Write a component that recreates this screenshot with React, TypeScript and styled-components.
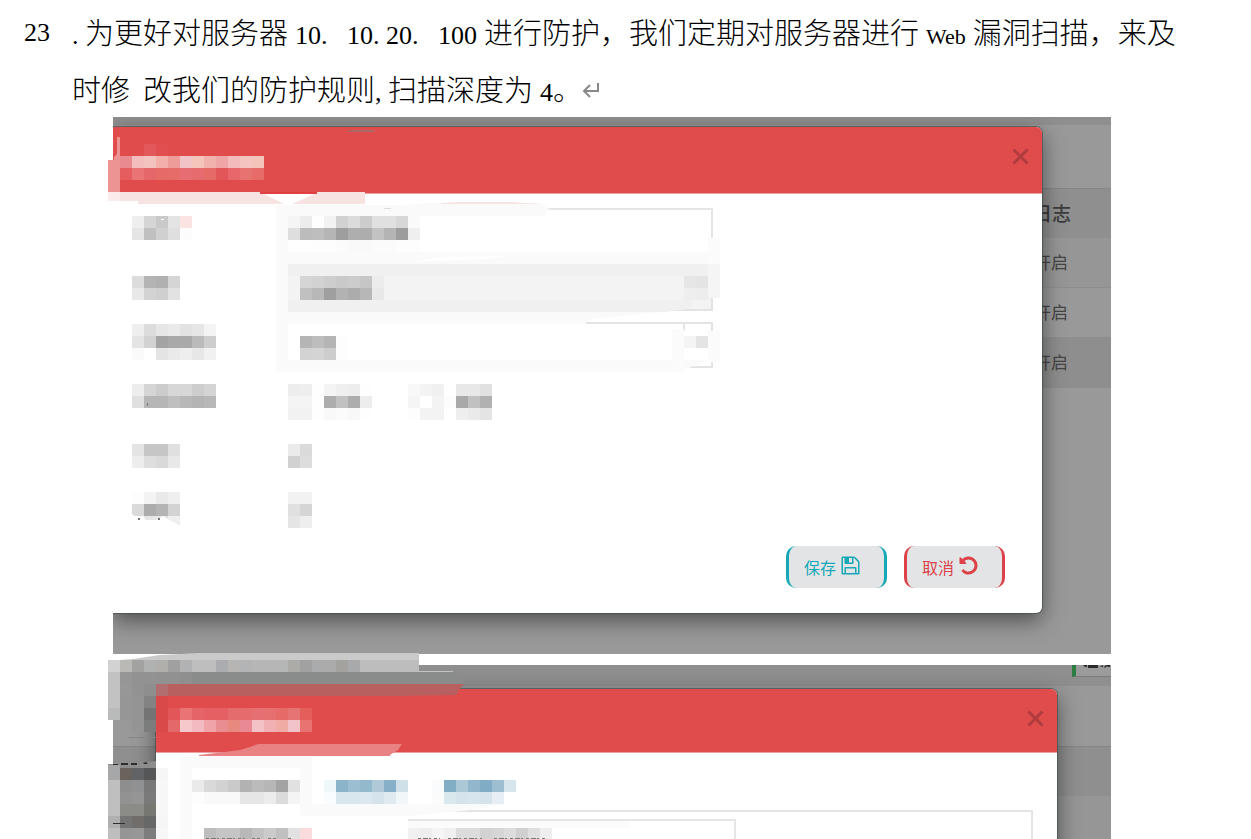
import React from "react";
import styled, { createGlobalStyle } from "styled-components";

const GlobalStyle = createGlobalStyle`
  * { box-sizing: border-box; }
  body { margin: 0; background: #fff; font-family: "Noto Sans CJK SC", sans-serif; }
`;

const Page = styled.main`
  height: 100vh;
  overflow: hidden;
  display: flex;
  flex-direction: column;
  padding-top: 3px;
`;

/* ---------- question text ---------- */

const Question = styled.div`
  display: grid;
  grid-template-columns: 48px 1fr;
  padding: 0 64px 0 24px;
  font-size: 29px;
  font-weight: 300;
  line-height: 57px;
  color: #000;
`;

const QuestionText = styled.p`
  margin: 0;
`;

const Latin = styled.span<{ $before?: boolean; $after?: boolean }>`
  font-family: "Liberation Serif", serif;
  font-size: 26px;
  font-weight: 400;
  line-height: 1;
  margin-left: ${(p) => (p.$before ? "7px" : "0")};
  margin-right: ${(p) => (p.$after ? "7px" : "0")};
`;

const LatinWord = styled(Latin)`
  font-size: 22px;
`;

const Half = styled.span`
  display: inline-block;
  width: 13px;
  white-space: pre;
`;

const QuestionNumber = styled.span`
  font-family: "Liberation Serif", serif;
  font-size: 26px;
  font-weight: 400;
  line-height: 60px;
`;

const ReturnMark = styled.svg`
  width: 18px;
  height: 16px;
  vertical-align: 3px;
`;

/* ---------- figures ---------- */

const Figure = styled.figure<{ $fill?: boolean }>`
  position: relative;
  display: grid;
  margin: 0 140px 11px 113px;
  ${(p) => (p.$fill ? "flex: 1; margin-bottom: 0;" : "")}
`;

const Scene = styled.div`
  display: grid;
  overflow: hidden;
`;

const Backdrop = styled.div`
  grid-area: 1 / 1;
  background: #999;
`;

const Strip = styled.div<{ $height: number }>`
  display: flex;
  justify-content: flex-end;
  height: ${(p) => p.$height}px;
  background: #8f8f8f;
`;

const LogTable = styled.table<{ $top: number }>`
  width: 100%;
  margin-top: ${(p) => p.$top}px;
  border-collapse: collapse;
  font-size: 17px;
  line-height: 24px;
  color: #454545;
`;

const HeadCell = styled.th`
  height: 50px;
  padding: 0 40px 0 0;
  background: #8f8f8f;
  box-shadow: inset 0 1px #868686;
  text-align: right;
  font-weight: 500;
  font-size: 19px;
  color: #3c3c3c;
`;

const Cell = styled.td<{ $tone: string }>`
  height: 50px;
  padding: 0 43px 2px 0;
  background: ${(p) => p.$tone};
  box-shadow: inset 0 -1px #8e8e8e;
  text-align: right;
`;

const GreenButton = styled.button`
  width: 39px;
  height: 12px;
  padding: 0;
  border: 0;
  border-left: 4px solid #2c7d41;
  border-bottom: 1px solid #7c7c7c;
  background: #9b9b9b;
  display: flex;
  align-items: flex-start;
`;

const Dialog = styled.section<{ $margin: string; $radius: string }>`
  grid-area: 1 / 1;
  position: relative;
  margin: ${(p) => p.$margin};
  background: #fff;
  border-radius: ${(p) => p.$radius};
  box-shadow: 0 0 0 1px rgba(60, 75, 75, 0.6), 0 7px 22px rgba(0, 0, 0, 0.5);
`;

const DialogHeader = styled.header<{ $height: number; $corner: string }>`
  display: flex;
  justify-content: flex-end;
  align-items: flex-start;
  height: ${(p) => p.$height}px;
  padding: 21px 13px;
  background: #e04b4b;
  border-bottom: 1px solid #e9a2a0;
  border-radius: ${(p) => p.$corner};
`;

const CloseButton = styled.button`
  padding: 0;
  border: 0;
  background: none;
  line-height: 0;
`;

const Form = styled.form`
  display: flex;
  flex-direction: column;
  gap: 11px;
  padding: 14px 37px 25px 174px;
`;

const Row = styled.label`
  display: flex;
  align-items: center;
  height: 46px;
`;

const RowGroup = styled.div`
  display: flex;
  gap: 96px;
`;

const TextInput = styled.input`
  width: 426px;
  height: 46px;
  border: 2px solid #e6e6e6;
  background: #fff;
  outline: none;
`;

const SelectBox = styled.select`
  width: 426px;
  height: 46px;
  border: 2px solid #e3e3e3;
  border-radius: 0;
  appearance: none;
  background: #fff;
  &:disabled { background: #f3f3f3; opacity: 1; }
`;

const Choice = styled.input`
  appearance: none;
  width: 24px;
  height: 24px;
  margin: 0;
`;

const Actions = styled.div`
  display: flex;
  justify-content: flex-end;
  gap: 17px;
  margin-top: -4px;
`;

const ActionButton = styled.button<{ $color: string }>`
  display: flex;
  align-items: center;
  gap: 4px;
  width: 101px;
  height: 42px;
  padding: 0 0 0 15px;
  border: solid ${(p) => p.$color};
  border-width: 0 3px;
  border-radius: 10px;
  background: #e2e4e6;
  color: ${(p) => p.$color};
  font: 400 16px/24px "Noto Sans CJK SC", sans-serif;
`;

const Icon = styled.svg`
  width: 21px;
  height: 21px;
  margin-bottom: 4px;
  fill: currentColor;
`;

const TabBody = styled.div`
  padding: 57px 24px 0;
`;

const Panel = styled.fieldset`
  min-height: 200px;
  margin: 0;
  padding: 7px 0 0 226px;
  border: 2px solid #e4e4e4;
`;

const PanelInput = styled(TextInput)`
  display: block;
  width: 328px;
`;

const Redaction = styled.svg<{ $top: number }>`
  position: absolute;
  left: -5px;
  top: ${(p) => p.$top}px;
  pointer-events: none;
`;

/* ---------- mosaic ---------- */

const CELL = 12;

/* One string per row; two digits are a grey, six are a full colour, "." leaves the cell clear. */
type Patch = [x: number, y: number, ...rows: string[]];

function Mosaic({ patches }: { patches: Patch[] }) {
  return (
    <g shapeRendering="crispEdges">
      {patches.flatMap(([x, y, ...rows]) =>
        rows.flatMap((row, r) =>
          row.split(" ").map((tone, c) =>
            tone === "." ? null : (
              <rect
                key={`${x}-${y}-${r}-${c}`}
                x={x + c * CELL}
                y={y + r * CELL}
                width={CELL}
                height={CELL}
                fill={"#" + (tone.length === 2 ? tone.repeat(3) : tone)}
              />
            )
          )
        )
      )}
    </g>
  );
}

const formPatches: Patch[] = [
  [144, 144, "e3595b e14f50"],
  [
    120, 156,
    "e98990 f3bdbe f3c3c0 f3b0aa ee9c99 f1c4c7 f5c4bb f1b2ae efa5a5 f3bbbb f4c5c0 f4c4bb",
    "e55d5f e87475 e66769 e66b66 e66c68 e66e72 e66b6e e66b66 e2565a e7676b e77370 e66b69",
  ],
  [132, 216, "ee d5 c9 e4 fae3e2", "e5 c0 d0 df fc"],
  [288, 216, "f5 ec fe f2 d1 db cc e0 e0 d7 fa", "de bc be b5 9e ae ad c2 b4 9d ef", "fe fe fd fd fb f9 f9 fb fb fd fd"],
  [132, 276, "dc b4 b0 d5", "e8 d3 cf e2"],
  [300, 276, "d5 d2 cd c9 cc c6 ec", "c0 b8 9f b2 ac b7 e8"],
  [684, 276, "e6 e4", "ee ed"],
  [132, 324, "ee dc e6 ea e2 e6 f4", "e4 d2 a3 a9 a9 ba cd", "fa ff e4 ea ee e7 f1"],
  [300, 336, "b5 bd b5 fd", "d3 d4 cd fd"],
  [684, 336, "f4 e4"],
  [132, 384, "ed d5 cc d7 d7 cd d4", "e0 b6 b6 bf b8 b4 b8"],
  [288, 384, "ed ee fe f4 ef ed fe", "f4 f4 fe ad c1 ad ed", "f2 f2 fe f9 fb f8 fe"],
  [408, 384, "f8 f3 f0 ff e8 e8 e1", "f5 ff f3 fc a9 c1 b1", "fd f3 f3 ff ee ea e4"],
  [132, 444, "e4 c6 c6 e0", "ed de d9 e8"],
  [288, 444, "eb da", "d1 dd"],
  [132, 492, "fd f3 e9 ef", "da ac b4 d3", ". ee e0 ef"],
  [288, 492, "f2 f2", "e0 d5", "e5 ee"],
];

const tabPatches: Patch[] = [
  [
    108, 660,
    "d2 bab9b6 a2a2a1 b0b2b1 b1afac a0 b0b2b4 be be aaacb0 b6b5b3 b2b4b6 b6 b6 b5b6b6 acaba8 a1 aaabac ab a3a29f a8a9aa",
    "c2 96 92 92 91 91 8f",
    "c2 97 92 8e b26e6e",
    "c2 96 94 83 d94949",
    "b8bbb9 96 94 74 d94949",
  ],
  [132, 720, "94 7b7d7c d94949"],
  [
    168, 708,
    "e2565a e87476 e46467 e46063 e46063 e56c6d e56b6d e66f73 e66f70 e66b68 e77475 e45f5c",
    "e4676a f5c8cb f3bbc1 f0a3a8 ea8d90 e8897f e98996 f2c2c6 f1b0b4 f0aba5 f2c3c8 e87471",
  ],
  [
    108, 768,
    "a5a7a9 69625d 626367 545657 f6",
    "bf 8e 8f9193 777877 f7",
    "bf 92 95 7a f7",
    "bf 8b8b88 8b8b88 777772 f7",
    "b0 747474 706d6b 666867 f6",
    "be 95 97 7d f7",
  ],
  [192, 780, "ea d9 d2 ca b2 bb b6 a3 e1", "fd f9 f9 f9 e6 e6 ec db f4"],
  [
    324, 780,
    "f0f7fa 8bb3c9 9bbed0 93b9cd afc9d8 86b0c7 d0e0e9",
    "f9fcfe d8e6ee d8e6ee dbe8ef d5e4ec dee9f0 f1f6f9",
  ],
  [
    432, 780,
    "fafbfc 81adc5 abc8d7 92b7cd 80acc5 9dbdd1 d7e5ed",
    "fb d9e8ed d5e4ec d7e6ee d5e4ec e8eff4",
  ],
  [204, 828, "bd c5 c5 b8 c2 cb c0 e1 fadcdc"],
  [408, 828, "f1 ee f5 f0 dc dc d2 d6 dc d0 df ee"],
];

function CloseIcon() {
  return (
    <svg width="17" height="17" viewBox="0 0 17 17" stroke="#b03c3d" strokeWidth="3">
      <path d="M1.5 1.5 15.5 15.5M15.5 1.5 1.5 15.5" />
    </svg>
  );
}

function FloppyIcon() {
  return (
    <Icon viewBox="0 0 1792 1792">
      <path d="M512 1536h768v-384h-768v384zm896 0h128v-896q0-14-10-38.5t-20-34.5l-281-281q-10-10-34-20t-39-10v416q0 40-28 68t-68 28h-576q-40 0-68-28t-28-68v-416h-128v1280h128v-416q0-40 28-68t68-28h832q40 0 68 28t28 68v416zm-384-928v-320q0-13-9.5-22.5t-22.5-9.5h-192q-13 0-22.5 9.5t-9.5 22.5v320q0 13 9.5 22.5t22.5 9.5h192q13 0 22.5-9.5t9.5-22.5zm640 32v928q0 40-28 68t-68 28h-1344q-40 0-68-28t-28-68v-1344q0-40 28-68t68-28h928q40 0 88 20t76 48l280 280q28 28 48 76t20 88z" />
    </Icon>
  );
}

function UndoIcon() {
  return (
    <Icon viewBox="0 0 1792 1792">
      <path d="M1664 896q0 156-61 298t-164 245-245 164-298 61q-172 0-327-72.5t-264-204.5q-7-10-6.5-22.5t8.5-20.5l137-138q10-9 25-9 16 2 23 12 73 95 179 147t225 52q104 0 198.5-40.5t163.5-109.5 109.5-163.5 40.5-198.5-40.5-198.5-109.5-163.5-163.5-109.5-198.5-40.5q-98 0-188 35.5t-160 101.5l137 138q31 30 14 69-17 40-59 40h-448q-26 0-45-19t-19-45v-448q0-42 40-59 39-17 69 14l130 129q107-101 244.5-156.5t284.5-55.5q156 0 298 61t245 164 164 245 61 298z" />
    </Icon>
  );
}

function FormFigure() {
  return (
    <Figure>
      <Scene>
        <Backdrop>
          <Strip $height={8} />
          <LogTable $top={63}>
            <thead>
              <tr><HeadCell scope="col">日志</HeadCell></tr>
            </thead>
            <tbody>
              <tr><Cell $tone="#969696">开启</Cell></tr>
              <tr><Cell $tone="#999999">开启</Cell></tr>
              <tr><Cell $tone="#8e8e8e">开启</Cell></tr>
            </tbody>
          </LogTable>
        </Backdrop>
        <Dialog $margin="10px 69px 41px 0" $radius="0 6px 6px 0">
          <DialogHeader $height={67} $corner="0 6px 0 0">
            <CloseButton type="button"><CloseIcon /></CloseButton>
          </DialogHeader>
          <Form>
            <Row><TextInput type="text" /></Row>
            <Row><SelectBox disabled /></Row>
            <Row><SelectBox /></Row>
            <RowGroup>
              <Row><Choice type="radio" name="mode" /></Row>
              <Row><Choice type="radio" name="mode" /></Row>
            </RowGroup>
            <Row><Choice type="checkbox" /></Row>
            <Row><Choice type="checkbox" /></Row>
            <Actions>
              <ActionButton type="button" $color="#16a8b6">保存<FloppyIcon /></ActionButton>
              <ActionButton type="button" $color="#dc4248">取消<UndoIcon /></ActionButton>
            </Actions>
          </Form>
        </Dialog>
      </Scene>
      <Redaction $top={0} width="612" height="424" viewBox="108 117 612 424">
        <rect x="108" y="160" width="12" height="32" fill="#ec9494" />
        <path d="M117 137h3v24h-6v-4l3-3z" fill="#ec9494" />
        <rect x="108" y="192" width="12" height="9" fill="#fbeceb" />
        <path d="M120 192H260L270 196 287 205 300 200 317 192H365V204H138V201H120z" fill="#f7e3e1" />
        <path d="M264 194H314L290 205H286z" fill="#fff" />
        <path d="M260 192H317V194H260z" fill="#e23f40" />
        <path d="M347 131 355 130H373L375 132H347z" fill="#a96a67" />
        <path d="M276 205H400L430 203H541L549 209 544 216H288V252H276z" fill="#fafafa" />
        <path d="M441 203 462 202H511L542 204H441z" fill="#f7e3e1" />
        <path d="M276 252H708V264H276z" fill="#fafafa" />
        <path d="M415 262 440 257 507 256 485 259z" fill="#fff" />
        <path d="M276 264H288V372H276z" fill="#fafafa" />
        <path d="M288 264H708V276H288z" fill="#f0f0f0" />
        <path d="M288 276H684V300H288z" fill="#f3f3f3" />
        <path d="M288 300H690L694 304 688 309 665 312H288z" fill="#f0f0f0" />
        <path d="M288 312H665L590 319 585 324H288z" fill="#fafafa" />
        <path d="M288 324H300V360H288z" fill="#fff" />
        <path d="M288 360H708L694 366 678 372H288z" fill="#fafafa" />
        <path d="M683 323H685V331H683z" fill="#e4e4e4" />
        <path d="M672 329H684V372H672z" fill="#fbfbfb" />
        <path d="M708 238H720V264H708zM708 331H720V362H708z" fill="#fbfbfb" />
        <path d="M708 264H720V298H708z" fill="#f5f5f5" />
        <Mosaic patches={formPatches} />
        <path d="M384 208H391V209H384z" fill="#ddd" />
        <path d="M161 219h3v1h-3z" fill="#fff" />
        <path d="M132 514 138 519 156 520 163 516 180 526V530H132z" fill="#fff" />
        <path d="M144 516H158V520H146z" fill="#e6e6e6" />
        <path d="M147 403h1v3h-1zM138 518h2v2h-2zM158 518h2v2h-2z" fill="#777" />
      </Redaction>
    </Figure>
  );
}

function TabFigure() {
  return (
    <Figure $fill>
      <Scene>
        <Backdrop>
          <Strip $height={21}>
            <GreenButton type="button">
              <svg width="34" height="4" viewBox="0 0 34 4" fill="#2b2b2b">
                <path d="M7 0h4v2H9zM12 0h10v3H12zM24 2l3-2v2zM28 2l2-2h4v2h-2l-1-1-2 2z" />
              </svg>
            </GreenButton>
          </Strip>
          <LogTable $top={60}>
            <tbody>
              <tr><HeadCell as="td" /></tr>
              <tr><Cell $tone="#969696" /></tr>
            </tbody>
          </LogTable>
        </Backdrop>
        <Dialog $margin="24px 54px 0 43px" $radius="6px 6px 0 0">
          <DialogHeader $height={64} $corner="0 6px 0 0">
            <CloseButton type="button"><CloseIcon /></CloseButton>
          </DialogHeader>
          <TabBody>
            <Panel>
              <label><PanelInput type="text" /></label>
            </Panel>
          </TabBody>
        </Dialog>
      </Scene>
      <Redaction $top={-12} width="612" height="187" viewBox="108 653 612 187">
        <path d="M108 661 120 660 133 659 160 655 199 653H419V672H108z" fill="#cacaca" />
        <path d="M348 660H419V672H348z" fill="#bdbdbd" />
        <path d="M180 672H453L465 684H180z" fill="#8a8c8b" />
        <path d="M419 671H453V672H419z" fill="#c4c4c4" />
        <path d="M156 684H464L459 690 456 695 400 696H156z" fill="#b86060" />
        <path d="M199 755 224 752 240 750 250 747 258 744H402L398 750 390 755V756H199z" fill="#e88283" />
        <path d="M180 757H312V768H192V840H180z" fill="#fafafa" />
        <path d="M300 768H312V804H507L462 811 430 814 408 816H300z" fill="#fafafa" />
        <path d="M192 808H300V840H192z" fill="#fff" />
        <path d="M192 816H408V840H192z" fill="#fff" />
        <path d="M408 821H630V828H408z" fill="#fbfbfb" />
        <path d="M108 764H132L156 761V768H108z" fill="#8d8d8d" />
        <path d="M108 765H120V768H108z" fill="#a5a7a9" />
        <path d="M128 737H156V738H130z" fill="#858585" />
        <Mosaic patches={tabPatches} />
        <path d="M113 764h5v1h-5zM121 763h7v2h-7zM131 763h6v2h-6zM143 763l3-1 2 2h-4zM113 823h12v1h-12z" fill="#2e2e2e" />
        <path
          d="M206 838.5H245M252 838.5H260M268 838.5H276M288 838.5H292M418 838.5H440M448 838.5H482M494 838.5H545"
          stroke="#777"
          strokeWidth="1"
          strokeDasharray="3 2 5 1 2 3"
        />
      </Redaction>
    </Figure>
  );
}

export default function App() {
  return (
    <>
      <GlobalStyle />
      <Page>
        <Question>
          <QuestionNumber>23</QuestionNumber>
          <QuestionText>
            <Latin><Half>.</Half></Latin>
            为更好对服务器
            <Latin $before $after>
              10<Half>.</Half><Half> </Half>10<Half>.</Half>20<Half>.</Half><Half> </Half>100
            </Latin>
            进行防护，我们定期对服务器进行
            <LatinWord $before $after>Web</LatinWord>
            漏洞扫描，来及
            <wbr />
            时修
            <Latin><Half> </Half></Latin>
            改我们的防护规则
            <Latin><Half>,</Half></Latin>
            扫描深度为
            <Latin $before>4</Latin>。
            <ReturnMark viewBox="0 0 18 16" fill="none" stroke="#888" strokeWidth="2">
              <path d="M16 1V9H2M8 3 2 9 8 15" />
            </ReturnMark>
          </QuestionText>
        </Question>
        <FormFigure />
        <TabFigure />
      </Page>
    </>
  );
}
